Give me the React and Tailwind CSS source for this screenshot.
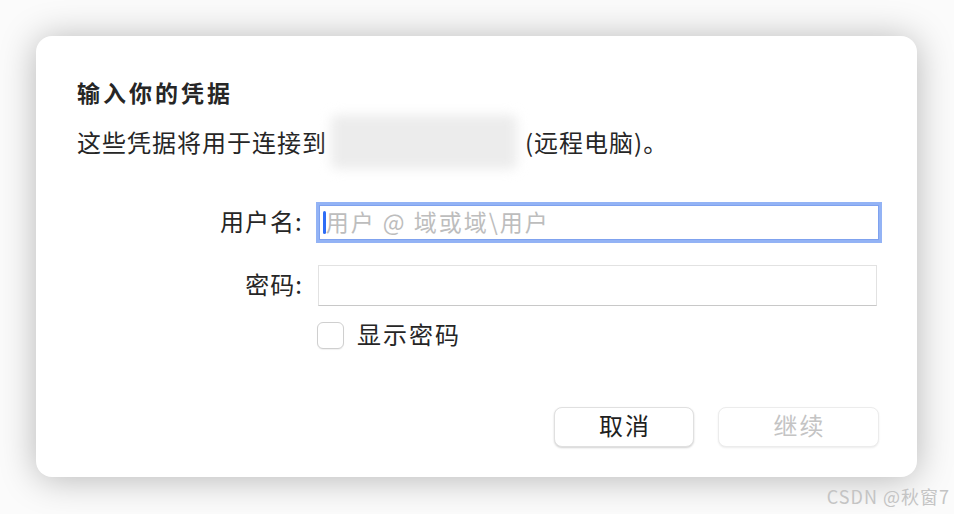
import React from "react";

const font = { fontFamily: '"Noto Sans CJK SC", "Noto Sans", sans-serif' };

export default function App() {
  return (
    <div
      className="w-[954px] h-[514px] bg-[#fbfbfb] pt-[36px] pl-[36px] relative overflow-hidden"
      style={font}
    >
      {/* Dialog */}
      <div className="w-[881px] h-[441px] bg-white rounded-[16px] shadow-[0_2px_36px_rgba(0,0,0,0.28)] pl-[41px] pr-[38px] pt-[42px] flex flex-col text-[#262626]">
        <h1 className="text-[23px] leading-[28px] font-bold tracking-[3px]">输入你的凭据</h1>
        <div className="flex items-center text-[24px] leading-[28px] tracking-[1px] mt-[22px]">
          <span>这些凭据将用于连接到</span>
          <span className="w-[186px] h-[54px] -my-[13px] ml-[4px] mr-[8px] bg-[#ececec] blur-[6px] rounded-md" />
          <span>(远程电脑)。</span>
        </div>

        {/* Username */}
        <div className="flex items-center mt-[49px]">
          <label className="w-[226px] text-right text-[24px] leading-[28px] tracking-[1px] -mt-[4px]">用户名:</label>
          <div className="ml-[16px] w-[561px] h-[35px] bg-white border border-[#7fa2ef] ring-[3px] ring-[#93b3f5] flex items-center pl-[3px]">
            <span className="w-[3px] h-[23px] bg-[#2f6df6] rounded-sm" />
            <span className="text-[23px] leading-[28px] tracking-[2px] text-[#bdbdbd] -mt-[3px]">用户 @ 域或域\用户</span>
          </div>
        </div>

        {/* Password */}
        <div className="flex items-center mt-[25px]">
          <label className="w-[226px] text-right text-[24px] leading-[28px] tracking-[1px] -mt-[4px]">密码:</label>
          <div className="ml-[15px] w-[559px] h-[41px] bg-white border border-[#e2e2e2] border-b-[#c8c8c8]" />
        </div>

        {/* Show password */}
        <div className="flex items-center mt-[16px] ml-[240px]">
          <span className="w-[27px] h-[27px] rounded-[6px] border border-[#cfcfcf] bg-white shadow-[0_1px_1px_rgba(0,0,0,0.06)]" />
          <span className="ml-[13px] text-[24px] leading-[28px] tracking-[2px] -mt-[3px]">显示密码</span>
        </div>

        {/* Buttons */}
        <div className="flex justify-end gap-[24px] mt-[58px]">
          <button className="w-[140px] h-[40px] rounded-[8px] bg-white border border-[#e0e0e0] shadow-[0_1px_2px_rgba(0,0,0,0.18)] text-[24px] leading-[28px] tracking-[2px] pl-[2px] pb-[4px] text-[#1f1f1f]">
            取消
          </button>
          <button className="w-[161px] h-[40px] rounded-[8px] bg-white border border-[#ececec] shadow-[0_1px_2px_rgba(0,0,0,0.08)] text-[24px] leading-[28px] tracking-[2px] pl-[2px] pb-[4px] text-[#c4c4c4]">
            继续
          </button>
        </div>
      </div>

      {/* Watermark */}
      <div className="absolute right-[4px] bottom-[7px] text-[18px] leading-[22px] tracking-[1px] text-[#c4c4c4]">
        CSDN @秋窗7
      </div>
    </div>
  );
}
